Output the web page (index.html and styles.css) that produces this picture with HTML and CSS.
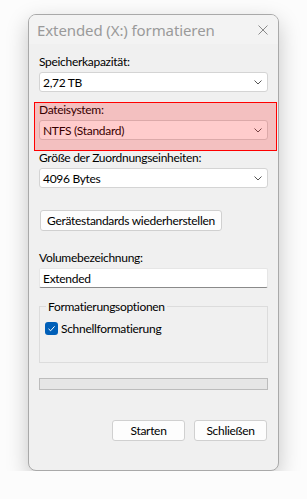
FILE: index.html
```html
<!DOCTYPE html>
<html lang="de">
<head>
    <meta charset="UTF-8">
    <title>Extended (X:) formatieren</title>
    <link rel="stylesheet" href="styles.css">
</head>
<body>
<div class="window">
    <!-- Titelleiste -->
    <div class="titlebar">
        <span class="title">Extended (X:) formatieren</span>
        <svg class="close" viewBox="0 0 10 10" width="10" height="10">
            <path d="M0.5 0.5 L9.5 9.5 M9.5 0.5 L0.5 9.5"/>
        </svg>
    </div>
    <div class="content">
        <div class="field">
            <label class="label">Speicherkapazität:</label>
            <div class="select"><span>2,72 TB</span><svg class="chevron" viewBox="0 0 8 5" width="8" height="5"><path d="M0.5 0.5 L4 4 L7.5 0.5"/></svg></div>
        </div>
        <div class="field highlight">
            <label class="label">Dateisystem:</label>
            <div class="select"><span>NTFS (Standard)</span><svg class="chevron" viewBox="0 0 8 5" width="8" height="5"><path d="M0.5 0.5 L4 4 L7.5 0.5"/></svg></div>
            <div class="marker"></div>
        </div>
        <div class="field">
            <label class="label">Größe der Zuordnungseinheiten:</label>
            <div class="select"><span>4096 Bytes</span><svg class="chevron" viewBox="0 0 8 5" width="8" height="5"><path d="M0.5 0.5 L4 4 L7.5 0.5"/></svg></div>
        </div>
        <div class="restore-row">
            <button class="btn restore">Gerätestandards wiederherstellen</button>
        </div>
        <div class="field volume">
            <label class="label">Volumebezeichnung:</label>
            <div class="input">Extended</div>
        </div>
        <fieldset class="options">
            <legend>Formatierungsoptionen</legend>
            <div class="check">
                <span class="box"><svg viewBox="0 0 13 13" width="13" height="13"><path d="M3.5 6.8 L5.6 8.8 L9.6 4.3"/></svg></span>
                <span>Schnellformatierung</span>
            </div>
        </fieldset>
        <div class="progress"></div>
        <div class="actions">
            <button class="btn">Starten</button>
            <button class="btn">Schließen</button>
        </div>
    </div>
</div>
</body>
</html>
```
FILE: styles.css
```css
body {
    margin: 0;
    padding: 14px 0 0 28px;
    background-color: #fcfcfc;
    font-family: Lato, "Noto Sans", sans-serif;
    font-size: 12px;
    letter-spacing: -0.3px;
    color: #000;
}
/* Fenster */
.window {
    width: 249px;
    height: 455px;
    background: #f0f0f0;
    border: 1px solid #a9a9a9;
    border-radius: 8px;
    box-shadow: 0 8px 22px rgba(0, 0, 0, 0.22);
    overflow: hidden;
    display: flex;
    flex-direction: column;
}
.titlebar {
    height: 29px;
    background: #f3f3f3;
    display: flex;
    align-items: center;
    justify-content: space-between;
    padding: 0 10px 0 8px;
    flex-shrink: 0;
}
.title {
    font-family: "Noto Sans", sans-serif;
    font-size: 15px;
    color: #9a9a9a;
    letter-spacing: -0.1px;
}
.close {
    stroke: #8a8a8a;
    stroke-width: 1;
    fill: none;
}
.content {
    position: relative;
    padding: 10px 10px 0 10px;
    display: flex;
    flex-direction: column;
}
/* Felder */
.field {
    position: relative;
    display: flex;
    flex-direction: column;
    margin-bottom: 10px;
}
.label {
    line-height: 15px;
    margin-bottom: 3px;
    white-space: nowrap;
}
.select, .input {
    height: 18px;
    background: #fff;
    border: 1px solid #d4d4d4;
    border-radius: 3px;
    display: flex;
    align-items: center;
    justify-content: space-between;
    padding: 0 4px 0 3px;
}
.chevron {
    stroke: #555;
    stroke-width: 1;
    fill: none;
    margin-right: 1px;
}
.input {
    border-color: #e6e6e6;
    border-bottom-color: #8a8a8a;
    border-radius: 2px;
}
/* Markierung */
.marker {
    position: absolute;
    left: -5px;
    top: 0px;
    width: 241px;
    height: 47px;
    border: 1px solid #f00;
    background: rgba(255, 0, 0, 0.2);
}
.btn {
    font-family: inherit;
    font-size: 12px;
    letter-spacing: -0.3px;
    color: #000;
    height: 21px;
    background: #fdfdfd;
    border: 1px solid #d0d0d0;
    border-radius: 3px;
    padding: 0;
}
.restore-row {
    display: flex;
    margin-top: 12px;
}
.restore {
    padding: 0 6px;
    margin-left: 1px;
}
.volume {
    margin-top: 19px;
    margin-bottom: 0;
}
/* Gruppe */
.options {
    margin: 11px 0 0 0;
    padding: 7px 5px 0 6px;
    height: 64px;
    box-sizing: border-box;
    border: 1px solid #dcdcdc;
    min-width: 0;
}
.options legend {
    padding: 0 2px;
    margin-left: 0;
    line-height: 15px;
}
.check {
    display: flex;
    align-items: center;
    gap: 3px;
    margin-left: -1px;
}
.box {
    width: 13px;
    height: 13px;
    background: #005fb8;
    border-radius: 3px;
    display: flex;
}
.box path {
    stroke: #fff;
    stroke-width: 1;
    fill: none;
}
.progress {
    margin-top: 15px;
    height: 10px;
    background: #e6e6e6;
    border: 1px solid #bcbcbc;
}
.actions {
    display: flex;
    justify-content: flex-end;
    gap: 9px;
    margin-top: 30px;
    padding-right: 1px;
}
.actions .btn {
    width: 73px;
}
```
